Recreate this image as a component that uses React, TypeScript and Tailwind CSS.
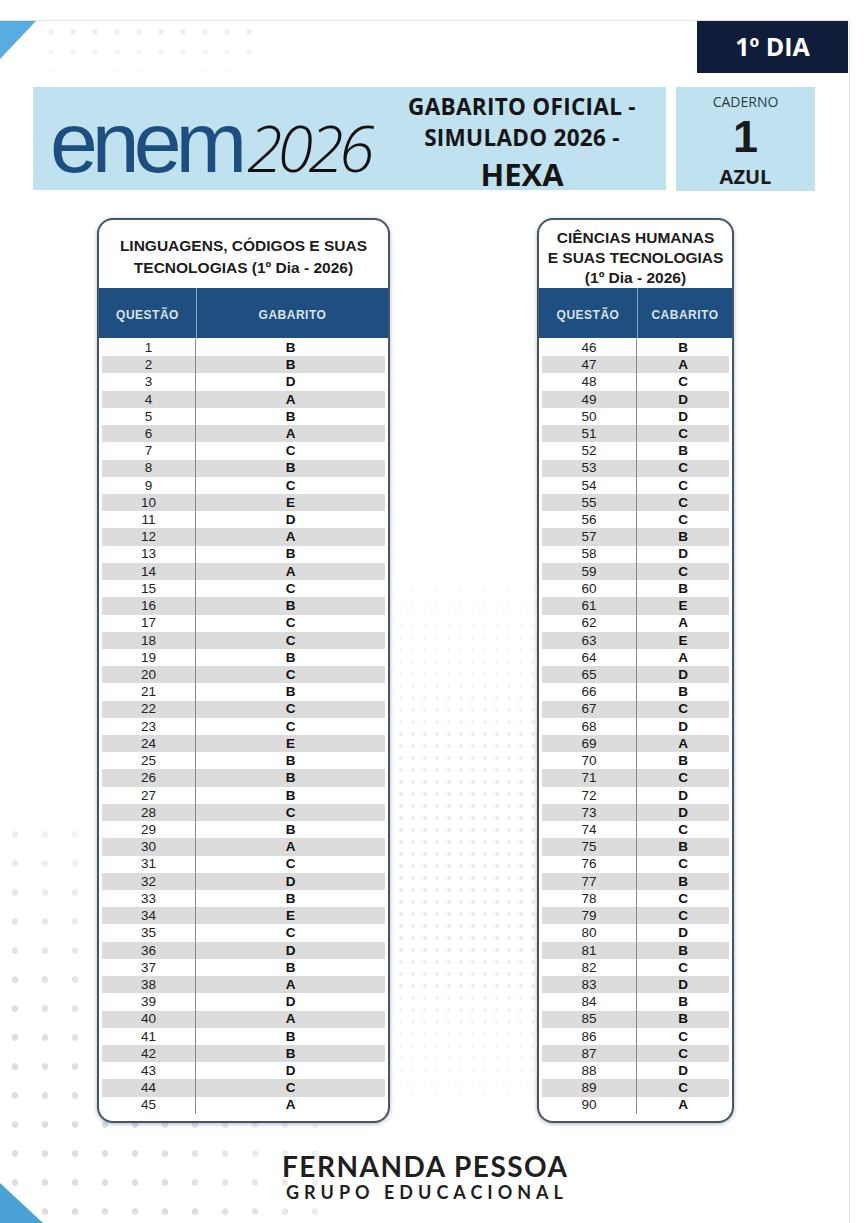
const left = "BBDABACBCEDABACBCCBCBCCEBBBCBACDBECDBADABBDCA";
const right = "BACDDCBCCCCBDCBEAEADBCDABCDDCBCBCCDBCDBBCCDCA";

type CardProps = {
  title: string[];
  answerLabel: string;
  start: number;
  answers: string;
  width: string;
  headCols: string;
  rowCols: string;
  titleClass: string;
};

function AnswerCard({ title, answerLabel, start, answers, width, headCols, rowCols, titleClass }: CardProps) {
  return (
    <div
      className={`${width} rounded-[16px] border-2 border-[#435669] bg-white overflow-hidden shadow-[0_1px_4px_rgba(0,0,0,0.3)]`}
    >
      <div className={`h-[68px] flex flex-col items-center text-center font-bold text-[#1c1c1c] ${titleClass}`}>
        {title.map((t) => (
          <div key={t}>{t}</div>
        ))}
      </div>
      <div className={`h-[50px] grid ${headCols} bg-[#1f4e80] text-[12px] font-bold tracking-[0.5px] text-[#dbe3ec]`}>
        <div className="flex items-center justify-center pt-[3px]">QUESTÃO</div>
        <div className="flex items-center justify-center pt-[3px] border-l border-[#8aa2bb]">{answerLabel}</div>
      </div>
      <div className="px-[3px] pt-[1px] pb-[7px] text-[13.5px] leading-none">
        {answers.split("").map((a, i) => (
          <div key={i} className={`h-[17.23px] grid ${rowCols} ${i % 2 === 1 ? "bg-[#dcdcdc]" : "bg-white"}`}>
            <div className="flex items-center justify-center text-[#222] border-r border-[#8a8a8a]">{start + i}</div>
            <div className="flex items-center justify-center font-bold text-[#111]">{a}</div>
          </div>
        ))}
      </div>
    </div>
  );
}

export default function App() {
  return (
    <div className="relative w-[864px] h-[1223px] bg-white overflow-hidden font-['Liberation_Sans',Arial,sans-serif]">
      {/* dotted background */}
      <div className="absolute left-0 top-[820px] w-[340px] h-[403px] bg-[radial-gradient(circle,#dedede_3px,transparent_3.6px)] bg-[length:30px_29px] [mask-image:linear-gradient(to_top_right,black_30%,transparent_75%)]" />
      <div className="absolute left-[40px] top-[22px] w-[220px] h-[60px] bg-[radial-gradient(circle,#ececec_2.5px,transparent_3px)] bg-[length:22px_20px] [mask-image:linear-gradient(to_bottom,black,transparent)]" />
      <div className="absolute left-[395px] top-[560px] w-[140px] h-[560px] bg-[radial-gradient(circle,#ebebeb_1.6px,transparent_2px)] bg-[length:12px_12px] [mask-image:linear-gradient(to_bottom,transparent,black_40%,black_70%,transparent)]" />

      {/* corner triangles */}
      <div className="absolute left-0 top-[20px] w-[37px] h-[39px] bg-[#58acdf] [clip-path:polygon(0_0,100%_0,0_100%)]" />
      <div className="absolute left-0 bottom-0 w-[43px] h-[40px] bg-[#4aa1d6] [clip-path:polygon(0_0,100%_100%,0_100%)]" />

      <div className="relative mt-[20px] w-[850px] h-[1203px] border-t border-r border-[#e2e2e2]">
        <div className="flex justify-end pr-[1px]">
          <div className="w-[151px] h-[52px] bg-[#0f1d3a] flex items-center justify-center text-white text-[25px] font-bold font-['Open_Sans',sans-serif]">
            1º DIA
          </div>
        </div>

        <div className="mt-[14px] pl-[33px] flex gap-[10px]">
          <div className="w-[633px] h-[103px] bg-[#bfe1f0] flex items-center">
            <div className="w-[347px] pl-[17px] flex items-baseline pt-[6px]">
              <span className="text-[86px] leading-none tracking-[-6px] text-[#1d4e80] font-['Liberation_Sans',sans-serif]">
                enem
              </span>
              <span className="ml-[6px] text-[64px] leading-none italic font-light tracking-[-4.5px] text-[#111] font-['Open_Sans',sans-serif]">
                2026
              </span>
            </div>
            <div className="flex-1 flex flex-col items-center font-['Open_Sans',sans-serif] font-bold text-[#151515] pr-[2px] pt-[8px]">
              <div className="text-[22.5px] leading-[31px] tracking-[0.3px]">GABARITO OFICIAL -</div>
              <div className="text-[22.5px] leading-[31px] tracking-[0.3px]">SIMULADO 2026 -</div>
              <div className="text-[31px] leading-[42px]">HEXA</div>
            </div>
          </div>
          <div className="w-[139px] h-[104px] bg-[#bfe1f0] flex flex-col items-center text-[#1a1a1a]">
            <div className="mt-[5px] text-[14px] leading-[19px] text-[#2b3a4a] font-['Open_Sans',sans-serif]">CADERNO</div>
            <div className="text-[45px] leading-[52px] font-bold">1</div>
            <div className="text-[20px] leading-[27px] font-bold font-['Open_Sans',sans-serif]">AZUL</div>
          </div>
        </div>

        <div className="mt-[27px] flex">
          <div className="ml-[97px]">
            <AnswerCard
              title={["LINGUAGENS, CÓDIGOS E SUAS", "TECNOLOGIAS (1º Dia - 2026)"]}
              answerLabel="GABARITO"
              start={1}
              answers={left}
              width="w-[293px]"
              headCols="grid-cols-[97px_1fr]"
              rowCols="grid-cols-[94px_1fr]"
              titleClass="justify-center text-[15.5px] leading-[22px] pt-[6px]"
            />
          </div>
          <div className="ml-[147px]">
            <AnswerCard
              title={["CIÊNCIAS HUMANAS", "E SUAS TECNOLOGIAS", "(1º Dia - 2026)"]}
              answerLabel="CABARITO"
              start={46}
              answers={right}
              width="w-[197px]"
              headCols="grid-cols-[98px_1fr]"
              rowCols="grid-cols-[95px_1fr]"
              titleClass="justify-end text-[15.5px] leading-[20px]"
            />
          </div>
        </div>

        <div className="mt-[29px] flex flex-col items-center font-['Lato',sans-serif] font-bold text-[#1f1f1f] leading-none">
          <div className="text-[28px] tracking-[1.5px] pl-[1.5px]">FERNANDA PESSOA</div>
          <div className="mt-[3px] text-[18px] tracking-[5px] pl-[5px]">GRUPO EDUCACIONAL</div>
        </div>
      </div>
    </div>
  );
}
